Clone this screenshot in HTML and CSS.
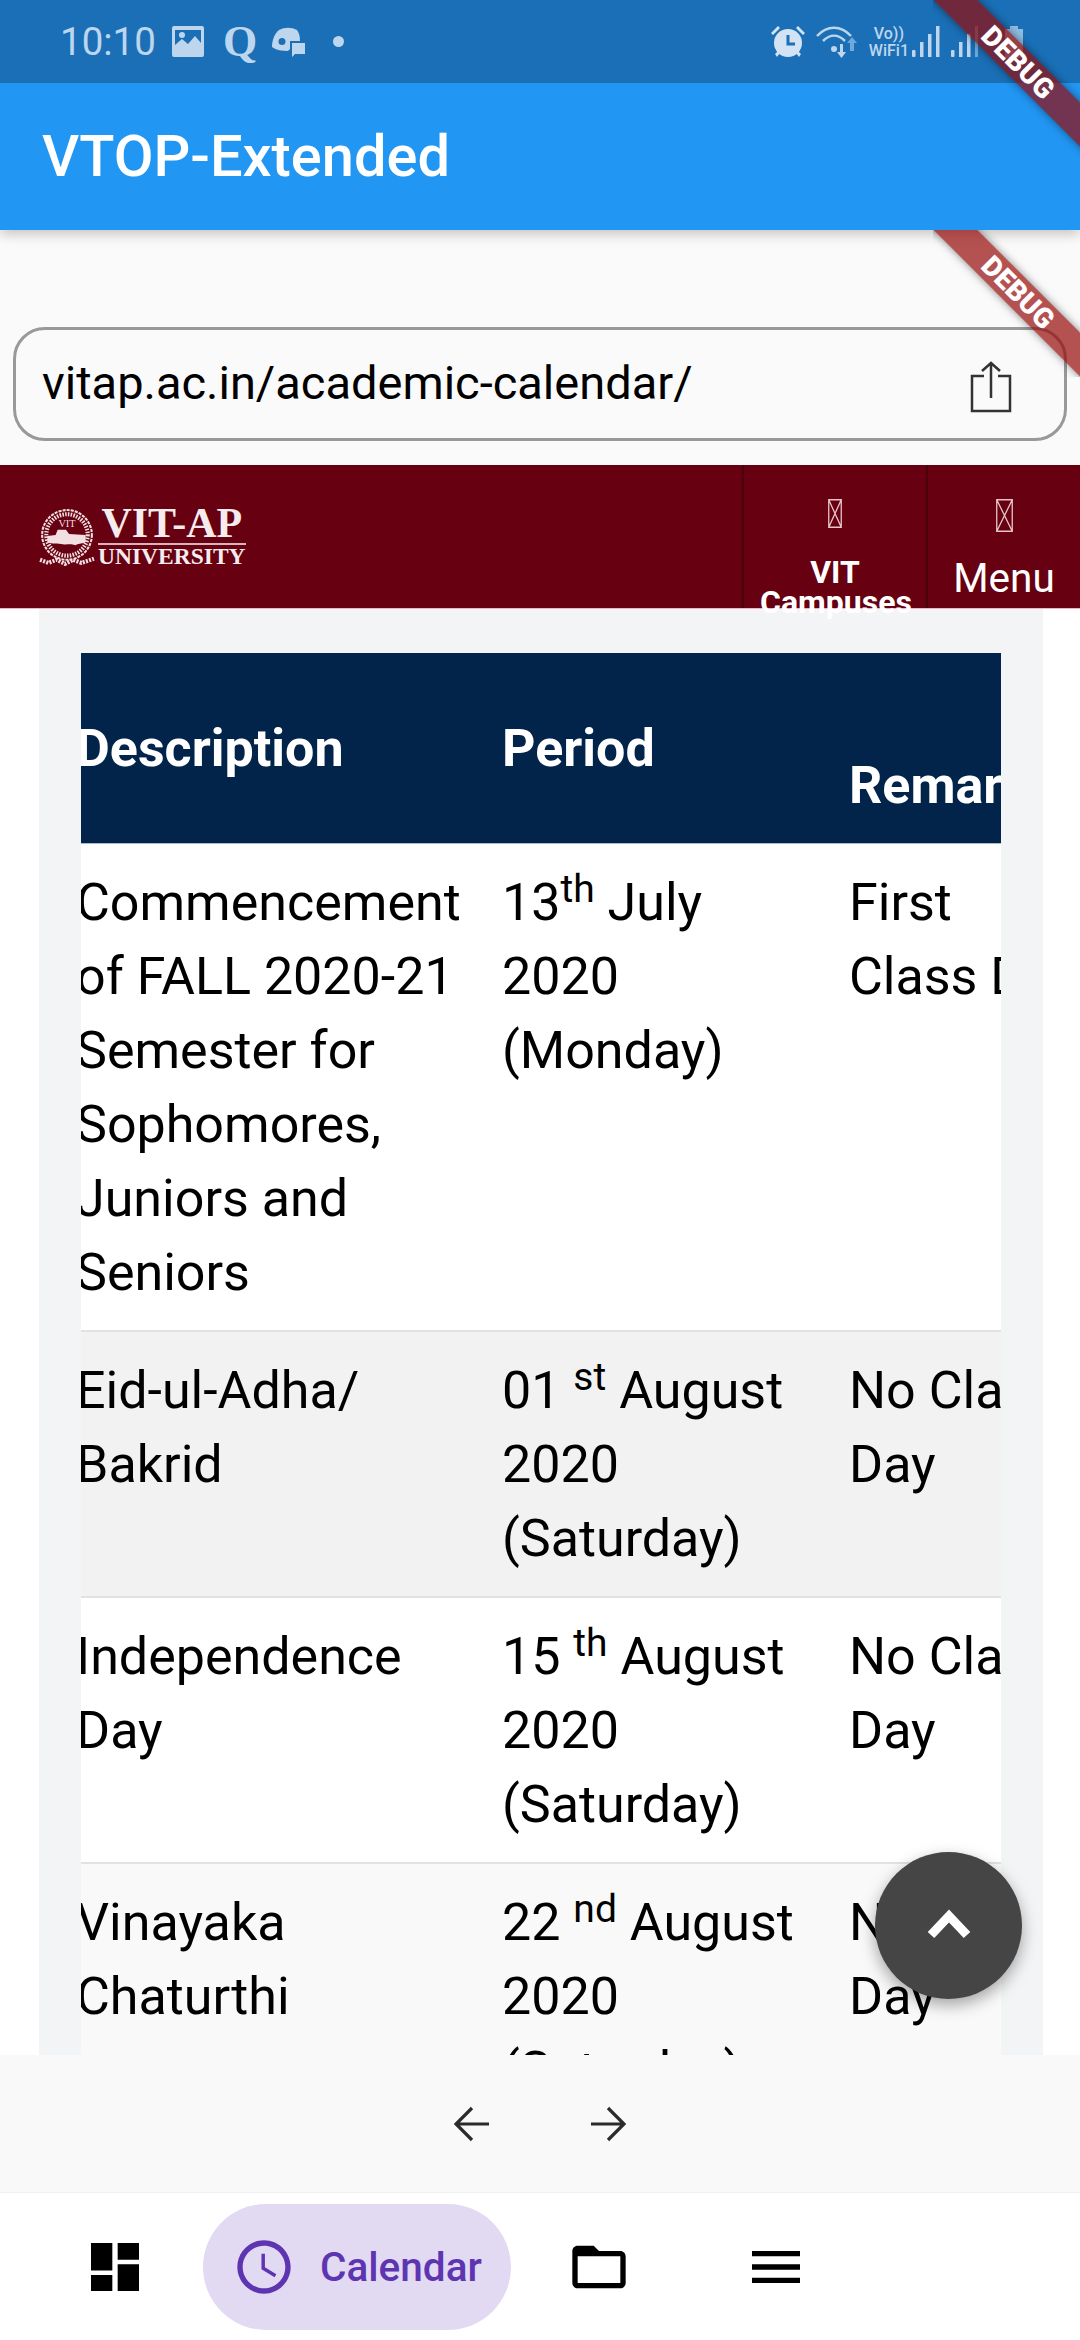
FILE: index.html
```html
<!DOCTYPE html>
<html lang="en">
<head>
  <meta charset="UTF-8">
  <title>VTOP-Extended</title>
  <link rel="stylesheet" href="styles.css">
</head>
<body>
  <div class="screen">
    <!-- Status bar -->
    <div class="status-bar">
      <span class="clock">10:10</span>
      <svg class="st-image" width="32" height="31" viewBox="0 0 32 31"><path fill="#bdd6ee" fill-rule="evenodd" d="M2 0h28a2 2 0 0 1 2 2v27a2 2 0 0 1-2 2H2a2 2 0 0 1-2-2V2a2 2 0 0 1 2-2zm1 4v15l7-6 6 5 7-8 6 7V4H3z"/><circle cx="10" cy="9" r="3" fill="#bdd6ee"/></svg>
      <span class="st-q">Q</span>
      <svg class="st-chat" width="34" height="30" viewBox="0 0 34 30"><path fill="#bdd6ee" fill-rule="evenodd" d="M8 3c6-3 12-3 18 0 2 3 3 6 3 11h-10v8l-2 2c-6 0-12-1-16-4C1 13 4 6 8 3zm3 8a3.500 3.500 0 1 0 0 7 3.500 3.500 0 0 0 0-7z"/><path fill="#bdd6ee" d="M21 16h13v11H24l-3 3z"/></svg>
      <span class="st-dot"></span>
      <div class="status-right">
        <svg width="34" height="32" viewBox="0 0 34 32"><g fill="#d3e3f3"><circle cx="17" cy="17" r="14"/><path d="M0 7l7-7 2 2-7 7zM34 7l-7-7-2 2 7 7zM4 28l3-3 2 2-3 4zM30 28l-3-3-2 2 3 4z"/></g><path d="M17 9v9h7" fill="none" stroke="#1a6fb6" stroke-width="3"/></svg>
        <svg class="st-wifi" width="42" height="32" viewBox="0 0 42 32"><g fill="none" stroke="#bdd6ee" stroke-width="2.500"><path d="M1 10c10-11 24-11 34 0"/><path d="M7 15c7-7 15-7 22 0"/></g><circle cx="18" cy="23" r="3" fill="#bdd6ee"/><path fill="#bdd6ee" d="M24 18h3v8h3l-4.500 6L21 26h3z"/><path fill="#6fa9da" d="M36 11l5 6h-3v8h-4v-8h-3z"/></svg>
        <div class="st-volte"><span>Vo))</span><span>WiFi1</span></div>
        <svg width="28" height="31" viewBox="0 0 28 31"><g fill="#bdd6ee"><rect x="0" y="24" width="3.500" height="7" rx="1"/><rect x="8" y="16" width="3.500" height="15"/><rect x="16" y="8" width="3.500" height="23"/><rect x="24" y="0" width="3.500" height="31"/></g></svg>
        <svg width="28" height="31" viewBox="0 0 28 31"><g fill="#bdd6ee"><rect x="0" y="24" width="3.500" height="7" rx="1"/><rect x="8" y="16" width="3.500" height="15"/><rect x="16" y="8" width="3.500" height="23"/></g><rect x="24" y="0" width="3" height="31" fill="#6fa9da"/></svg>
        <svg class="st-battery" width="18" height="32" viewBox="0 0 18 32"><path fill="#8fbce2" d="M5 0h8v3h5v29H0V3h5z"/></svg>
      </div>
      <div class="debug"><div class="debug-ribbon">DEBUG</div></div>
    </div>

    <header class="app-bar">VTOP-Extended</header>

    <!-- Address field -->
    <section class="url-section">
      <div class="debug"><div class="debug-ribbon">DEBUG</div></div>
      <div class="url-field">
        <span class="url-text">vitap.ac.in/academic-calendar/</span>
        <svg class="share-icon" width="42" height="52" viewBox="0 0 42 52"><path d="M14 15H2v35h38V15H28M21 37V2M12 10l9-8 9 8" fill="none" stroke="#333" stroke-width="2.500"/></svg>
      </div>
    </section>

    <!-- Site header inside the web view -->
    <nav class="site-nav">
      <div class="site-logo">
        <svg width="56" height="58" viewBox="0 0 54 56">
          <circle cx="27" cy="26" r="24" fill="none" stroke="#f1dfe2" stroke-width="2" stroke-dasharray="3 1"/>
          <circle cx="27" cy="26" r="20" fill="none" stroke="#f1dfe2" stroke-width="4" stroke-dasharray="1.500 1.200"/>
          <text x="27" y="18" class="seal-text" text-anchor="middle">VIT</text>
          <path fill="#f1dfe2" d="M8 33v-6l8-1 2-5h8l3 4 16 1v7c-5 2-7 1-10 3-5-2-8 0-12-1-5-1-10 0-15-2z"/>
          <path d="M1 50l8 3 8-3 8 4 8-4 8 3 12-4" fill="none" stroke="#f1dfe2" stroke-width="4" stroke-dasharray="2 1.200"/>
        </svg>
        <div class="logo-words">
          <span class="logo-main">VIT-AP</span>
          <span class="logo-sub">UNIVERSITY</span>
        </div>
      </div>
      <div class="nav-cell nav-campus">
        <svg width="14" height="29" viewBox="0 0 14 29"><path d="M.75.75h12.500v27.500H.75zM.75.75l12.500 27.500M13.250.75L.75 28.250" fill="none" stroke="#e8c4cb" stroke-width="1.300"/></svg>
        <span class="campus-label">VIT Campuses</span>
      </div>
      <div class="nav-cell nav-menu">
        <svg width="17" height="33" viewBox="0 0 17 33"><path d="M.75.75h15.500v31.500H.75zM.75.75l15.500 31.500M16.250.75L.75 32.250" fill="none" stroke="#e8c4cb" stroke-width="1.300"/></svg>
        <span class="menu-label">Menu</span>
      </div>
    </nav>

    <!-- Academic calendar table -->
    <main class="content">
      <div class="panel">
        <div class="table-scroll">
          <table class="calendar">
            <thead>
              <tr>
                <th class="col-desc">Description</th>
                <th class="col-period">Period</th>
                <th class="col-remarks head-low">Remarks</th>
              </tr>
            </thead>
            <tbody>
              <tr>
                <td>Commencement of FALL 2020-21 Semester for Sophomores, Juniors and Seniors</td>
                <td>13<sup>th</sup> July 2020 (Monday)</td>
                <td>First<br>Class Day</td>
              </tr>
              <tr class="row-grey">
                <td>Eid-ul-Adha/ Bakrid</td>
                <td>01 <sup>st</sup> August 2020 (Saturday)</td>
                <td>No Class<br>Day</td>
              </tr>
              <tr>
                <td>Independence Day</td>
                <td>15 <sup>th</sup> August 2020 (Saturday)</td>
                <td>No Class<br>Day</td>
              </tr>
              <tr class="row-light">
                <td>Vinayaka Chaturthi</td>
                <td>22 <sup>nd</sup> August 2020 (Saturday)</td>
                <td>No Class<br>Day</td>
              </tr>
            </tbody>
          </table>
        </div>
      </div>
    </main>

    <!-- Back / forward -->
    <div class="web-controls">
      <svg width="36" height="36" viewBox="0 0 36 36"><path d="M35 18H3M18 2L2 18l16 16" fill="none" stroke="#2b2b2b" stroke-width="3.200"/></svg>
      <svg width="36" height="36" viewBox="0 0 36 36"><path d="M1 18h32M18 2l16 16-16 16" fill="none" stroke="#2b2b2b" stroke-width="3.200"/></svg>
    </div>

    <!-- Bottom navigation -->
    <footer class="bottom-nav">
      <svg width="64" height="64" viewBox="0 0 24 24"><path d="M3 3h8v10.300H3zM3 15h8v6H3zM13 3h8v6.300h-8zM13 11h8v10h-8z" fill="#000"/></svg>
      <div class="nav-pill">
        <svg width="64" height="64" viewBox="0 0 24 24"><path fill="#5e35b1" d="M11.990 2C6.470 2 2 6.480 2 12s4.470 10 9.990 10C17.520 22 22 17.520 22 12S17.520 2 11.990 2zM12 20c-4.420 0-8-3.580-8-8s3.580-8 8-8 8 3.580 8 8-3.580 8-8 8z"/><path fill="none" stroke="#5e35b1" stroke-width="1.300" d="M11.700 7v5.500l4.600 2.800"/></svg>
        <span class="pill-label">Calendar</span>
      </div>
      <svg width="64" height="64" viewBox="0 0 24 24"><path fill="#000" fill-rule="evenodd" d="M4 4h6l2 2h8c1.100 0 2 .9 2 2v10c0 1.100-.9 2-2 2H4c-1.100 0-2-.9-2-2V6c0-1.100.9-2 2-2zm0 4v10h16V8H4z"/></svg>
      <svg class="nav-last" width="64" height="64" viewBox="0 0 24 24"><path fill="#000" d="M3 18h18v-2H3v2zm0-5h18v-2H3v2zm0-7v2h18V6H3z"/></svg>
    </footer>

    <button class="fab">
      <svg width="44" height="30" viewBox="0 0 44 30"><path d="M4 26L22 7l18 19" fill="none" stroke="#fff" stroke-width="9"/></svg>
    </button>
  </div>
</body>
</html>
```

FILE: styles.css
```css
* {
  box-sizing: border-box;
}

body {
  margin: 0;
  font-family: Roboto, "Noto Sans", sans-serif;
}

.screen {
  position: relative;
  width: 1080px;
  height: 2340px;
  overflow: hidden;
  display: flex;
  flex-direction: column;
  background-color: #fff;
}

/* status bar */
.status-bar {
  position: relative;
  z-index: 3;
  flex: 0 0 83px;
  display: flex;
  align-items: center;
  padding: 0 57px 0 60px;
  background-color: #1a6fb6;
  color: #bdd6ee;
}

.clock {
  font-size: 38.5px;
  width: 112px;
}

.st-q {
  margin-left: 19px;
  width: 32px;
  font-family: "Liberation Serif", serif;
  font-weight: 700;
  font-size: 44px;
}

.st-chat {
  margin-left: 16px;
}

.st-dot {
  width: 11px;
  height: 11px;
  margin-left: 28px;
  border-radius: 50%;
  background-color: #bdd6ee;
}

.status-right {
  margin-left: auto;
  display: flex;
  align-items: center;
  gap: 11px;
}

.st-volte {
  display: flex;
  flex-direction: column;
  align-items: center;
  margin-right: -8px;
  font-size: 16px;
  line-height: 17px;
  font-weight: 500;
}

.st-battery {
  margin-left: 15px;
}

/* debug ribbon */
.debug {
  position: absolute;
  top: 0;
  right: 0;
  width: 147px;
  height: 147px;
  overflow: hidden;
  z-index: 4;
  pointer-events: none;
}

.debug-ribbon {
  position: absolute;
  left: -25px;
  top: 47px;
  width: 220px;
  height: 31px;
  line-height: 31px;
  transform: rotate(45deg);
  text-align: center;
  font-size: 28px;
  font-weight: 900;
  color: #fff;
  background-color: rgba(150, 10, 10, 0.7);
  box-shadow: 0 0 9px rgba(0, 0, 0, 0.45);
}

.status-bar .debug {
  height: 230px;
}

/* app bar */
.app-bar {
  position: relative;
  z-index: 2;
  flex: 0 0 147px;
  display: flex;
  align-items: center;
  padding: 0 0 2px 42px;
  background-color: #2196f3;
  color: #fff;
  font-size: 57.75px;
  font-weight: 500;
  box-shadow: 0 4px 12px rgba(0, 0, 0, 0.22);
}

/* address field */
.url-section {
  position: relative;
  flex: 0 0 235px;
  padding: 97px 13px 0;
  background-color: #fafafa;
}

.url-field {
  height: 114px;
  display: flex;
  align-items: center;
  justify-content: space-between;
  padding: 0 52px 0 26px;
  border: 3px solid #999;
  border-radius: 32px;
}

.url-text {
  font-size: 47px;
  color: #000;
  margin-top: -3px;
}

.share-icon {
  margin-top: 6px;
}

/* site header */
.site-nav {
  position: relative;
  z-index: 1;
  flex: 0 0 144px;
  min-height: 0;
  display: flex;
  background-color: #670010;
  color: #fff;
  border-bottom: 1px solid #e6b9c2;
}

.site-logo {
  flex: 0 0 742px;
  display: flex;
  align-items: center;
  gap: 3px;
  padding: 0 0 0 39px;
}

.seal-text {
  font-family: "Liberation Serif", serif;
  font-size: 10px;
  fill: #f1dfe2;
}

.logo-words {
  display: flex;
  flex-direction: column;
  align-items: center;
  font-family: "Liberation Serif", serif;
  font-weight: 700;
  color: #f6ecee;
}

.logo-main {
  font-size: 42px;
  line-height: 35px;
}

.logo-sub {
  margin-top: 2px;
  font-size: 23.5px;
  line-height: 22px;
  border-top: 2px solid #d9b3ba;
}

.nav-cell {
  display: flex;
  flex-direction: column;
  align-items: center;
  padding-top: 34px;
  border-left: 2px solid #4c000b;
}

.nav-cell svg,
.nav-cell span {
  flex: none;
}

.nav-campus {
  flex: 0 0 184px;
}

.nav-menu {
  flex: 1;
}

.campus-label {
  margin-top: 29px;
  width: 150px;
  font-size: 32px;
  line-height: 30px;
  font-weight: 700;
  text-align: center;
}

.menu-label {
  margin-top: 23px;
  font-size: 40.5px;
  line-height: 46px;
}

/* table */
.content {
  flex: 0 0 1446px;
  overflow: hidden;
  padding: 0 37px 0 39px;
  background-color: #fff;
}

.panel {
  height: 100%;
  padding: 44px 42px 0 42px;
  background-color: #f2f4f6;
}

.table-scroll {
  overflow: hidden;
  height: 100%;
}

.calendar {
  table-layout: fixed;
  width: 998px;
  margin-left: -5px;
  border-collapse: collapse;
  background-color: #fff;
  font-size: 52px;
  line-height: 74px;
  color: #000;
}

.col-desc {
  width: 426px;
}

.col-period {
  width: 347px;
}

.col-remarks {
  width: 225px;
}

th {
  height: 190px;
  padding: 59px 0 0;
  vertical-align: top;
  text-align: left;
  font-weight: 700;
  color: #fff;
  background-color: #02234a;
  border-bottom: 1px solid #a9b8c9;
  white-space: nowrap;
}

th.head-low {
  padding-top: 96px;
}

td {
  padding: 22px 30px 20px 0;
  vertical-align: top;
  border-bottom: 2px solid #e2e2e2;
}

td:nth-child(2) {
  padding-right: 47px;
}

td:nth-child(3) {
  padding-right: 0;
  white-space: nowrap;
}

sup {
  font-size: 39px;
  line-height: 0;
}

.row-grey td {
  background-color: #f2f2f2;
}

.row-light td {
  background-color: #f9f9f9;
}

/* back and forward */
.web-controls {
  position: relative;
  z-index: 1;
  flex: 0 0 138px;
  display: flex;
  align-items: center;
  justify-content: center;
  gap: 100px;
  background-color: #f9f9f9;
  border-bottom: 1px solid #f0f0f0;
}

/* bottom navigation */
.bottom-nav {
  position: relative;
  z-index: 1;
  flex: 1;
  display: flex;
  align-items: center;
  gap: 56px;
  padding: 0 0 0 83px;
  background-color: #fff;
}

.nav-last {
  margin-left: 57px;
}

.nav-pill {
  width: 308px;
  height: 126px;
  display: flex;
  align-items: center;
  gap: 24px;
  padding-left: 29px;
  border-radius: 63px;
  background-color: #e2d9f2;
}

.pill-label {
  font-size: 40.5px;
  font-weight: 500;
  color: #5e35b1;
}

/* scroll to top */
.fab {
  position: absolute;
  left: 875px;
  top: 1852px;
  z-index: 2;
  width: 147px;
  height: 147px;
  display: flex;
  align-items: center;
  justify-content: center;
  padding: 0 0 3px;
  border: none;
  border-radius: 50%;
  background-color: #454545;
  box-shadow: 0 6px 16px rgba(0, 0, 0, 0.35);
}
```
